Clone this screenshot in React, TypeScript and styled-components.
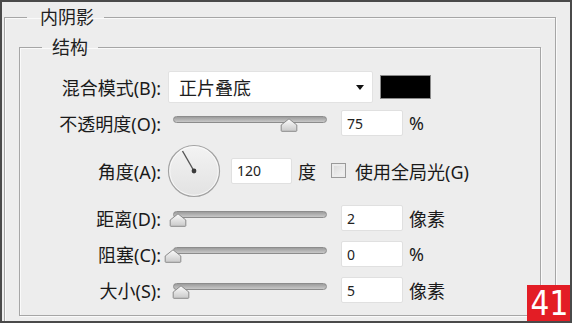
import React from 'react';
import styled, {createGlobalStyle} from 'styled-components';

const GlobalStyle = createGlobalStyle`
  html, body {
    margin: 0;
    padding: 0;
    background: #fff;
  }
  body {
    font-family: "Noto Sans", "Noto Sans CJK SC", sans-serif;
    color: #1e1e1e;
  }
`;

const Frame = styled.div`
  position: relative;
  box-sizing: border-box;
  width: 572px;
  height: 323px;
  overflow: hidden;
  background: #ededed;
  border: 2px solid #4a4a4a;
  padding: 5px 0 0 2px;
`;

const Group = styled.fieldset<{$outer?: boolean}>`
  box-sizing: border-box;
  margin: ${p => (p.$outer ? '0' : '10px 0 0 14px')};
  width: ${p => (p.$outer ? 552 : 522)}px;
  padding: ${p => (p.$outer ? '0 0 20px 0' : '12px 0 7px 0')};
  border: 1px solid #a6a6a6;
  box-shadow: 1px 1px 0 #fafafa, inset 1px 1px 0 #fafafa;
  min-width: 0;
`;

const Legend = styled.legend<{$outer?: boolean}>`
  margin-left: 22px;
  padding: ${p => (p.$outer ? '0 10px 0 13px' : '0 10px')};
  font-size: 18px;
  line-height: 20px;
  color: #1e1e1e;
`;

const Row = styled.div<{$h: number}>`
  display: flex;
  align-items: center;
  height: ${p => p.$h}px;
`;

const Label = styled.span`
  width: 141px;
  flex: none;
  text-align: right;
  font-size: 18px;
  white-space: nowrap;
  color: #1a1a1a;
`;

const Select = styled.div`
  box-sizing: border-box;
  display: flex;
  align-items: center;
  justify-content: space-between;
  width: 205px;
  height: 32px;
  margin-left: 7px;
  padding: 0 8px 0 10px;
  background: #fff;
  border: 1px solid #e2e2e2;
  border-radius: 2px;
  font-size: 18px;
`;

const Caret = styled.span`
  width: 0;
  height: 0;
  border-left: 4px solid transparent;
  border-right: 4px solid transparent;
  border-top: 5px solid #111;
`;

const Swatch = styled.div<{$color: string}>`
  box-sizing: border-box;
  width: 51px;
  height: 24px;
  margin-left: 7px;
  background: ${p => p.$color};
  border: 1px solid #8a8a8a;
`;

const SliderBox = styled.div`
  position: relative;
  flex: none;
  width: 154px;
  height: 16px;
  margin: 1px 0 0 12px;
`;

const Track = styled.div`
  box-sizing: border-box;
  height: 7px;
  border: 1px solid #8c8c8c;
  border-radius: 4px;
  background: linear-gradient(#9c9c9c, #c8c8c8);
`;

const Thumb = styled.svg`
  position: absolute;
  top: 2px;
  margin-left: -9px;
`;

const NumberBox = styled.input<{$ml: number; $w?: number}>`
  box-sizing: border-box;
  width: ${p => p.$w ?? 62}px;
  height: 26px;
  margin-left: ${p => p.$ml}px;
  padding: 0 0 0 5px;
  background: #fff;
  border: 1px solid #e0e0e0;
  border-radius: 2px;
  font-family: "Noto Sans", sans-serif;
  font-size: 14px;
  color: #222;
  outline: none;
`;

const Unit = styled.span<{$ml?: number}>`
  margin-left: ${p => p.$ml ?? 6}px;
  font-size: 18px;
  color: #1a1a1a;
  white-space: nowrap;
`;

const Dial = styled.svg`
  flex: none;
  margin-left: 6px;
`;

const Check = styled.span`
  box-sizing: border-box;
  width: 15px;
  height: 15px;
  margin-left: 15px;
  border: 1px solid #9a9a9a;
  background: linear-gradient(135deg, #d8d8d8, #f6f6f6);
  box-shadow: inset 0 0 0 2px #ececec;
`;

const Badge = styled.div`
  position: absolute;
  right: -2px;
  bottom: 0;
  width: 45px;
  height: 36px;
  background: #e31d25;
  color: #fff;
  font-family: "Liberation Sans Narrow", "DejaVu Sans Condensed", "Liberation Sans", sans-serif;
  font-size: 33px;
  line-height: 38px;
  text-align: center;
`;

type SliderRow = {label: string; value: string; unit: string; pos: number};

const sliders: SliderRow[] = [
  {label: '距离(D):', value: '2', unit: '像素', pos: 0.03},
  {label: '阻塞(C):', value: '0', unit: '%', pos: 0.0},
  {label: '大小(S):', value: '5', unit: '像素', pos: 0.05},
];

function Slider({pos}: {pos: number}) {
  return (
    <SliderBox>
      <Track/>
      <Thumb width="18" height="14" viewBox="0 0 18 14" style={{left: pos * 154}}>
        <defs>
          <linearGradient id="tg" x1="0" y1="0" x2="0" y2="1">
            <stop offset="0" stopColor="#fdfdfd"/>
            <stop offset="1" stopColor="#c9c9c9"/>
          </linearGradient>
        </defs>
        <path d="M9 0.8 L16.8 7 L16.8 12.6 Q16.8 13.3 16 13.3 L2 13.3 Q1.2 13.3 1.2 12.6 L1.2 7 Z"
              fill="url(#tg)" stroke="#8a8a8a" strokeWidth="1"/>
      </Thumb>
    </SliderBox>
  );
}

function AngleDial() {
  return (
    <Dial width="54" height="54" viewBox="0 0 54 54">
      <defs>
        <linearGradient id="dg" x1="0" y1="0" x2="0" y2="1">
          <stop offset="0" stopColor="#f3f3f3"/>
          <stop offset="1" stopColor="#e2e2e2"/>
        </linearGradient>
      </defs>
      <circle cx="27" cy="27" r="25.5" fill="url(#dg)" stroke="#a2a2a2" strokeWidth="1.2"/>
      <circle cx="27" cy="27" r="24.2" fill="none" stroke="#fbfbfb" strokeWidth="0.8"/>
      <line x1="27" y1="27" x2="15.5" y2="7" stroke="#555" strokeWidth="1.4"/>
      <circle cx="27" cy="27" r="2.4" fill="#3a3a3a"/>
    </Dial>
  );
}

export default function App() {
  return (
    <>
      <GlobalStyle/>
      <Frame>
        <Group $outer>
          <Legend $outer>内阴影</Legend>
          <Group>
            <Legend>结构</Legend>
            <Row $h={36}>
              <Label>混合模式(B):</Label>
              <Select>
                <span>正片叠底</span>
                <Caret/>
              </Select>
              <Swatch $color="#000"/>
            </Row>
            <Row $h={36}>
              <Label>不透明度(O):</Label>
              <Slider pos={0.75}/>
              <NumberBox $ml={14} defaultValue="75" readOnly/>
              <Unit>%</Unit>
            </Row>
            <Row $h={59}>
              <Label>角度(A):</Label>
              <AngleDial/>
              <NumberBox $ml={10} $w={61} defaultValue="120" readOnly/>
              <Unit>度</Unit>
              <Check/>
              <Unit $ml={9}>使用全局光(G)</Unit>
            </Row>
            {sliders.map(s => (
              <Row $h={36} key={s.label}>
                <Label>{s.label}</Label>
                <Slider pos={s.pos}/>
                <NumberBox $ml={14} defaultValue={s.value} readOnly/>
                <Unit>{s.unit}</Unit>
              </Row>
            ))}
          </Group>
        </Group>
        <Badge>41</Badge>
      </Frame>
    </>
  );
}
